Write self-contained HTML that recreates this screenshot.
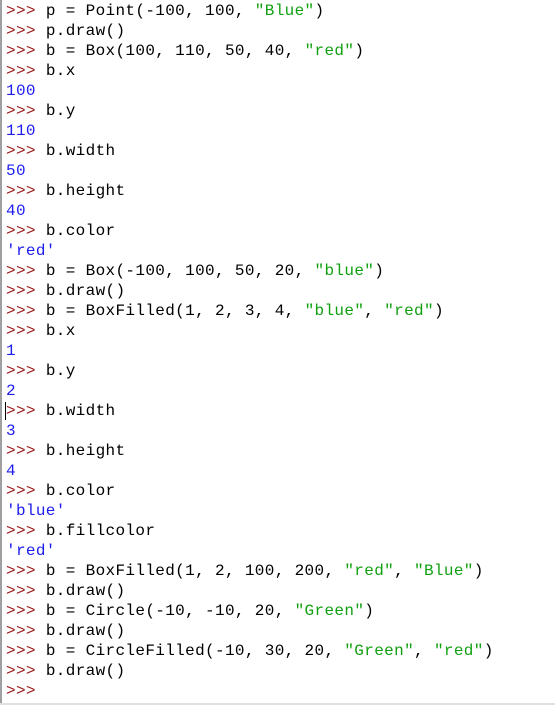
<!DOCTYPE html>
<html><head><style>
html,body{margin:0;padding:0;background:#fff;}
body{width:555px;height:705px;overflow:hidden;position:relative;}
#c{position:absolute;left:0;top:0;width:555px;height:703px;border-left:2px solid #a0a0a0;box-sizing:border-box;}
#b{position:absolute;left:0;top:703px;width:555px;height:2px;background:#e0e0e0;}
pre{margin:0;position:absolute;left:6px;top:1px;font-family:"Liberation Mono",monospace;font-size:16px;letter-spacing:0.35px;line-height:20px;color:#000;}
.p{color:#9b1c1c}.o{color:#1c1cf0}.s{color:#10a010}
#cur{position:absolute;left:5px;top:402px;width:1px;height:18px;background:#000;}
</style></head><body>
<div id="c"></div><div id="b"></div>
<pre><span class="p">&gt;&gt;&gt; </span>p = Point(-100, 100, <span class="s">"Blue"</span>)
<span class="p">&gt;&gt;&gt; </span>p.draw()
<span class="p">&gt;&gt;&gt; </span>b = Box(100, 110, 50, 40, <span class="s">"red"</span>)
<span class="p">&gt;&gt;&gt; </span>b.x
<span class="o">100</span>
<span class="p">&gt;&gt;&gt; </span>b.y
<span class="o">110</span>
<span class="p">&gt;&gt;&gt; </span>b.width
<span class="o">50</span>
<span class="p">&gt;&gt;&gt; </span>b.height
<span class="o">40</span>
<span class="p">&gt;&gt;&gt; </span>b.color
<span class="o">'red'</span>
<span class="p">&gt;&gt;&gt; </span>b = Box(-100, 100, 50, 20, <span class="s">"blue"</span>)
<span class="p">&gt;&gt;&gt; </span>b.draw()
<span class="p">&gt;&gt;&gt; </span>b = BoxFilled(1, 2, 3, 4, <span class="s">"blue"</span>, <span class="s">"red"</span>)
<span class="p">&gt;&gt;&gt; </span>b.x
<span class="o">1</span>
<span class="p">&gt;&gt;&gt; </span>b.y
<span class="o">2</span>
<span class="p">&gt;&gt;&gt; </span>b.width
<span class="o">3</span>
<span class="p">&gt;&gt;&gt; </span>b.height
<span class="o">4</span>
<span class="p">&gt;&gt;&gt; </span>b.color
<span class="o">'blue'</span>
<span class="p">&gt;&gt;&gt; </span>b.fillcolor
<span class="o">'red'</span>
<span class="p">&gt;&gt;&gt; </span>b = BoxFilled(1, 2, 100, 200, <span class="s">"red"</span>, <span class="s">"Blue"</span>)
<span class="p">&gt;&gt;&gt; </span>b.draw()
<span class="p">&gt;&gt;&gt; </span>b = Circle(-10, -10, 20, <span class="s">"Green"</span>)
<span class="p">&gt;&gt;&gt; </span>b.draw()
<span class="p">&gt;&gt;&gt; </span>b = CircleFilled(-10, 30, 20, <span class="s">"Green"</span>, <span class="s">"red"</span>)
<span class="p">&gt;&gt;&gt; </span>b.draw()
<span class="p">&gt;&gt;&gt; </span></pre>
<div id="cur"></div>
</body></html>
